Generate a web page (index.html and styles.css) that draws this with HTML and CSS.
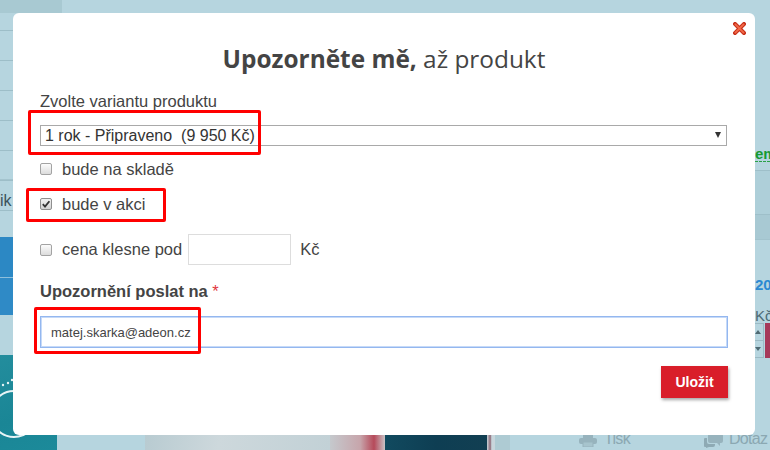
FILE: index.html
```html
<!DOCTYPE html>
<html lang="cs">
<head>
<meta charset="utf-8">
<title>Upozorněte mě</title>
<link rel="stylesheet" href="styles.css">
</head>
<body>
<div class="page">
  <div class="side-left">
    <div class="sl-top"></div>
    <div class="sl-row sl-row-first"></div>
    <div class="sl-row"></div>
    <div class="sl-row"></div>
    <div class="sl-row"></div>
    <div class="sl-row"></div>
    <div class="sl-row sl-row-double"></div>
    <div class="sl-row sl-row-text">ik</div>
    <div class="sl-gap"></div>
    <div class="sl-blue sl-blue-a"></div>
    <div class="sl-blue sl-blue-b"></div>
    <div class="sl-light"></div>
    <div class="sl-teal">
      <svg class="teal-art" width="57" height="95" viewBox="0 0 57 95">
        <circle cx="3" cy="30" r="1.2" fill="#e6f4f6"/>
        <circle cx="8" cy="28" r="1.2" fill="#e6f4f6"/>
        <circle cx="12" cy="25" r="1.2" fill="#e6f4f6"/>
        <circle cx="17" cy="24" r="1" fill="#cfe9ee"/>
        <circle cx="14" cy="59" r="23" fill="none" stroke="#e8f4f6" stroke-width="2"/>
      </svg>
    </div>
  </div>
  <div class="page-rest">
    <div class="page-top">
      <div class="page-center"></div>
      <div class="side-right">
        <div class="sr-link">em</div>
        <div class="sr-band sr-band-a"></div>
        <div class="sr-band sr-band-b"></div>
        <div class="sr-price">20</div>
        <div class="sr-currency">Kč</div>
        <div class="sr-spin">
          <div class="spin-box">
            <div class="spin-half"><span class="spin-up"></span></div>
            <div class="spin-half spin-half-low"><span class="spin-down"></span></div>
          </div>
          <div class="spin-red"></div>
        </div>
      </div>
    </div>
    <div class="page-bottom">
      <div class="pb-seg pb-light1"></div>
      <div class="pb-seg pb-grey"></div>
      <div class="pb-seg pb-red"></div>
      <div class="pb-seg pb-dark"></div>
      <div class="pb-seg pb-line"></div>
      <div class="pb-seg pb-light2"></div>
      <div class="pb-actions">
        <span class="pb-action pb-print">
          <svg width="18" height="12" viewBox="0 0 18 12"><rect x="4" y="0" width="10" height="3" fill="#97b3bd"/><rect x="0" y="3" width="18" height="6" rx="2" fill="#97b3bd"/><rect x="4" y="7" width="10" height="5" fill="#a7c4cd" stroke="#97b3bd"/></svg>
          Tisk
        </span>
        <span class="pb-action pb-ask">
          <svg width="19" height="14" viewBox="0 0 19 14"><path d="M6 0h11a2 2 0 0 1 2 2v5a2 2 0 0 1-2 2h-1v3l-3-3H6a2 2 0 0 1-2-2V2a2 2 0 0 1 2-2z" fill="#97b3bd"/><path d="M1 4h2v4a2 2 0 0 0 2 2h6v1a2 2 0 0 1-2 2H5l-3 1v-1H1a1 1 0 0 1-1-1V5a1 1 0 0 1 1-1z" fill="#8eaab4"/></svg>
          Dotaz
        </span>
      </div>
    </div>
  </div>
</div>

<div class="modal">
  <button class="close" type="button" aria-label="Zavřít">
    <svg width="13" height="13" viewBox="0 0 13 13"><path d="M2 2L11 11M11 2L2 11" stroke="#c8321c" stroke-width="4" stroke-linecap="square"/><path d="M2.4 2.4L10.6 10.6M10.6 2.4L2.4 10.6" stroke="#f36a48" stroke-width="1.8" stroke-linecap="round"/></svg>
  </button>
  <h2 class="title"><strong>Upozorněte mě,</strong> až produkt</h2>
  <div class="field-label">Zvolte variantu produktu</div>
  <div class="select-wrap">
    <select class="select">
      <option>1 rok - Připraveno&nbsp; (9 950 Kč)</option>
    </select>
    <span class="select-arrow"></span>
  </div>
  <label class="check-row row-a"><span class="cb"></span>bude na skladě</label>
  <label class="check-row row-b"><span class="cb cb-checked"><svg width="10" height="10" viewBox="0 0 10 10"><path d="M1.8 5.2L4 7.6L8.4 2.2" fill="none" stroke="#333" stroke-width="1.8"/></svg></span>bude v akci</label>
  <label class="check-row row-c"><span class="cb"></span>cena klesne pod<input class="price-input" type="text"><span class="currency">Kč</span></label>
  <div class="field-label field-label-bold">Upozornění poslat na <span class="req">*</span></div>
  <input class="email" type="text" value="matej.skarka@adeon.cz">
  <div class="actions"><button class="save" type="button">Uložit</button></div>

  <span class="mark mark-a"></span>
  <span class="mark mark-b"></span>
  <span class="mark mark-c"></span>
</div>
</body>
</html>
```

FILE: styles.css
```css
html, body {
  margin: 0;
  padding: 0;
}
body {
  width: 770px;
  height: 450px;
  overflow: hidden;
  position: relative;
  background: #b6d5df;
  font-family: "Liberation Sans", Arial, sans-serif;
}

/* ---------- background page ---------- */
.page {
  display: flex;
  width: 770px;
  height: 450px;
}
.side-left {
  width: 57px;
  flex: none;
  display: flex;
  flex-direction: column;
  background: #b6d5df;
}
.sl-top {
  height: 13px;
  background: #a8c9d2;
  width: 62px;
}
.sl-row {
  height: 29px;
  border-bottom: 1px solid #9dbec8;
}
.sl-row-first {
  height: 17px;
}
.sl-row-double {
  box-shadow: inset 0 -3px 0 -2px #a4c4ce;
}
.sl-row-text {
  font-size: 16px;
  line-height: 18px;
  padding-top: 11px;
  height: 18px;
  color: #3c535c;
}
.sl-gap {
  height: 26px;
}
.sl-blue-a {
  height: 40px;
  background: #2c88c4;
  border-bottom: 1px solid #8dbfdc;
}
.sl-blue-b {
  height: 37px;
  background: #2f8ac6;
}
.sl-light {
  height: 40px;
}
.sl-teal {
  height: 95px;
  background: linear-gradient(160deg, #238d9d, #1a8696 60%, #1c8a9a);
}
.teal-art {
  display: block;
}

.page-rest {
  flex: 1;
  display: flex;
  flex-direction: column;
}
.page-top {
  height: 435px;
  display: flex;
}
.page-center {
  flex: 1;
}
.side-right {
  width: 15px;
  flex: none;
  display: flex;
  flex-direction: column;
}
.sr-link {
  margin-top: 146px;
  height: 15px;
  line-height: 15px;
  font-size: 15px;
  font-weight: 700;
  color: #169a33;
  border-bottom: 1px dashed #2aa146;
  white-space: nowrap;
  overflow: hidden;
}
.sr-band {
  border-top: 1px solid #9ebfc9;
}
.sr-band-a {
  margin-top: 8px;
  height: 43px;
  background: #aecfd9;
}
.sr-band-b {
  height: 24px;
  background: #a8c9d3;
  border-bottom: 1px solid #a2c3cd;
}
.sr-price {
  margin-top: 38px;
  height: 14px;
  line-height: 14px;
  font-size: 15px;
  font-weight: 700;
  color: #2b89d2;
  white-space: nowrap;
  overflow: hidden;
}
.sr-currency {
  margin-top: 16px;
  height: 15px;
  line-height: 15px;
  font-size: 15px;
  color: #4c6b75;
  white-space: nowrap;
  overflow: hidden;
}
.sr-spin {
  height: 35px;
  display: flex;
}
.spin-box {
  width: 9px;
  border: 1px solid #9bbac4;
  border-left: none;
  box-sizing: border-box;
  display: flex;
  flex-direction: column;
}
.spin-half {
  flex: 1;
  display: flex;
  align-items: center;
  justify-content: flex-start;
}
.spin-half-low {
  border-top: 1px solid #9bbac4;
}
.spin-up, .spin-down {
  width: 0;
  height: 0;
  border-left: 3px solid transparent;
  border-right: 3px solid transparent;
}
.spin-up {
  border-bottom: 4px solid #4f6a73;
}
.spin-down {
  border-top: 4px solid #4f6a73;
}
.spin-red {
  width: 5px;
  margin-left: 1px;
  background: #a6395a;
}

.page-bottom {
  height: 15px;
  display: flex;
}
.pb-seg {
  flex: none;
}
.pb-light1 { width: 88px; }
.pb-grey {
  width: 185px;
  background: linear-gradient(100deg, #b8cbd1, #cdd8dc 40%, #c2d1d6);
}
.pb-red {
  width: 55px;
  background: linear-gradient(90deg, #c5c9cd, #c7a5ab 55%, #b64a5a 80%, #c9c3c6);
}
.pb-dark {
  width: 102px;
  background: linear-gradient(90deg, #114a5f, #0e3e53 50%, #123f52);
}
.pb-line {
  width: 8px;
  background: linear-gradient(90deg, #c9d5da, #8e6a78 40%, #c8d6dc 60%);
}
.pb-light2 {
  width: 15px;
  background: #aecbd3;
}
.pb-actions {
  flex: 1;
  display: flex;
  padding-left: 69px;
  overflow: hidden;
}
.pb-action {
  display: flex;
  align-items: center;
  gap: 7px;
  height: 16px;
  margin-top: -4px;
  line-height: 16px;
  font-size: 16px;
  letter-spacing: -0.7px;
  color: #8ba8b2;
  white-space: nowrap;
}
.pb-action svg {
  flex: none;
  margin-top: 3px;
}
.pb-print {
  width: 125px;
}
.pb-ask {
  gap: 6px;
}

/* ---------- modal ---------- */
.modal {
  position: absolute;
  left: 13px;
  top: 13px;
  width: 742px;
  height: 422px;
  background: #fff;
  border-radius: 6px;
  box-sizing: border-box;
  padding: 0 27px 0 27px;
  color: #444;
}
.close {
  position: absolute;
  top: 9px;
  right: 9px;
  width: 13px;
  height: 13px;
  padding: 0;
  border: none;
  background: none;
  cursor: pointer;
}
.close svg {
  display: block;
}
.title {
  margin: 27px 0 0;
  height: 38px;
  line-height: 38px;
  font-family: "Open Sans", sans-serif;
  font-size: 24.4px;
  font-weight: 400;
  text-align: center;
  color: #444;
}
.title strong {
  font-weight: 700;
}
.field-label {
  margin-top: 14px;
  height: 18px;
  line-height: 18px;
  font-size: 16.5px;
  color: #444;
}
.select-wrap {
  position: relative;
  margin-top: 15px;
  width: 687px;
  height: 21px;
}
.select {
  display: block;
  width: 100%;
  height: 21px;
  margin: 0;
  -webkit-appearance: none;
  appearance: none;
  border: 1px solid #a9a9a9;
  border-radius: 0;
  background: #fff;
  box-sizing: border-box;
  padding: 0 0 0 4px;
  font-family: "Liberation Sans", Arial, sans-serif;
  font-size: 16px;
  color: #333;
  outline: none;
}
.select-arrow {
  position: absolute;
  right: 6px;
  top: 7px;
  width: 0;
  height: 0;
  border-left: 3.5px solid transparent;
  border-right: 3.5px solid transparent;
  border-top: 6px solid #333;
  pointer-events: none;
}
.check-row {
  display: flex;
  align-items: center;
  font-size: 16.5px;
  color: #444;
  white-space: nowrap;
}
.row-a {
  margin-top: 11px;
  height: 24px;
}
.row-b {
  margin-top: 11px;
  height: 24px;
}
.row-c {
  margin-top: 18px;
  height: 31px;
}
.cb {
  flex: none;
  width: 12px;
  height: 12px;
  margin-right: 10px;
  box-sizing: border-box;
  border: 1px solid #a3a3a3;
  border-radius: 2px;
  background: linear-gradient(#fcfcfc, #dcdcdc);
  display: flex;
  align-items: center;
  justify-content: center;
}
.cb-checked {
  background: linear-gradient(#f2f2f2, #d2d2d2);
  border-color: #8f8f8f;
}
.cb svg {
  display: block;
}
.price-input {
  width: 103px;
  height: 31px;
  margin: 0 0 0 6px;
  box-sizing: border-box;
  border: 1px solid #ddd;
  background: #fff;
  padding: 0 6px;
  font: 14px "Liberation Sans", Arial, sans-serif;
  outline: none;
}
.currency {
  margin-left: 9px;
}
.field-label-bold {
  margin-top: 17px;
  font-weight: 700;
}
.req {
  color: #e0383e;
  font-weight: 400;
}
.email {
  display: block;
  margin-top: 16px;
  width: 688px;
  height: 32px;
  box-sizing: border-box;
  border: 1px solid #94b7ef;
  box-shadow: inset 0 0 0 1px #c6daf8;
  padding: 0 0 0 10px;
  font-family: "Liberation Sans", Arial, sans-serif;
  font-size: 13px;
  color: #444;
  outline: none;
  background: #fff;
}
.actions {
  margin-top: 18px;
  width: 688px;
  display: flex;
  justify-content: flex-end;
}
.save {
  width: 67px;
  height: 32px;
  border: none;
  padding: 0;
  background: #d91e2a;
  color: #fff;
  font-family: "Liberation Sans", Arial, sans-serif;
  font-size: 14px;
  font-weight: 700;
  box-shadow: 1px 2px 3px rgba(0, 0, 0, 0.35);
  cursor: pointer;
}

/* red annotation frames */
.mark {
  position: absolute;
  box-sizing: border-box;
  border: 3px solid #f00;
  border-radius: 2px;
  pointer-events: none;
}
.mark-a {
  left: 15px;
  top: 97px;
  width: 233px;
  height: 45px;
}
.mark-b {
  left: 13px;
  top: 175px;
  width: 140px;
  height: 34px;
}
.mark-c {
  left: 21px;
  top: 294px;
  width: 167px;
  height: 47px;
}
```
